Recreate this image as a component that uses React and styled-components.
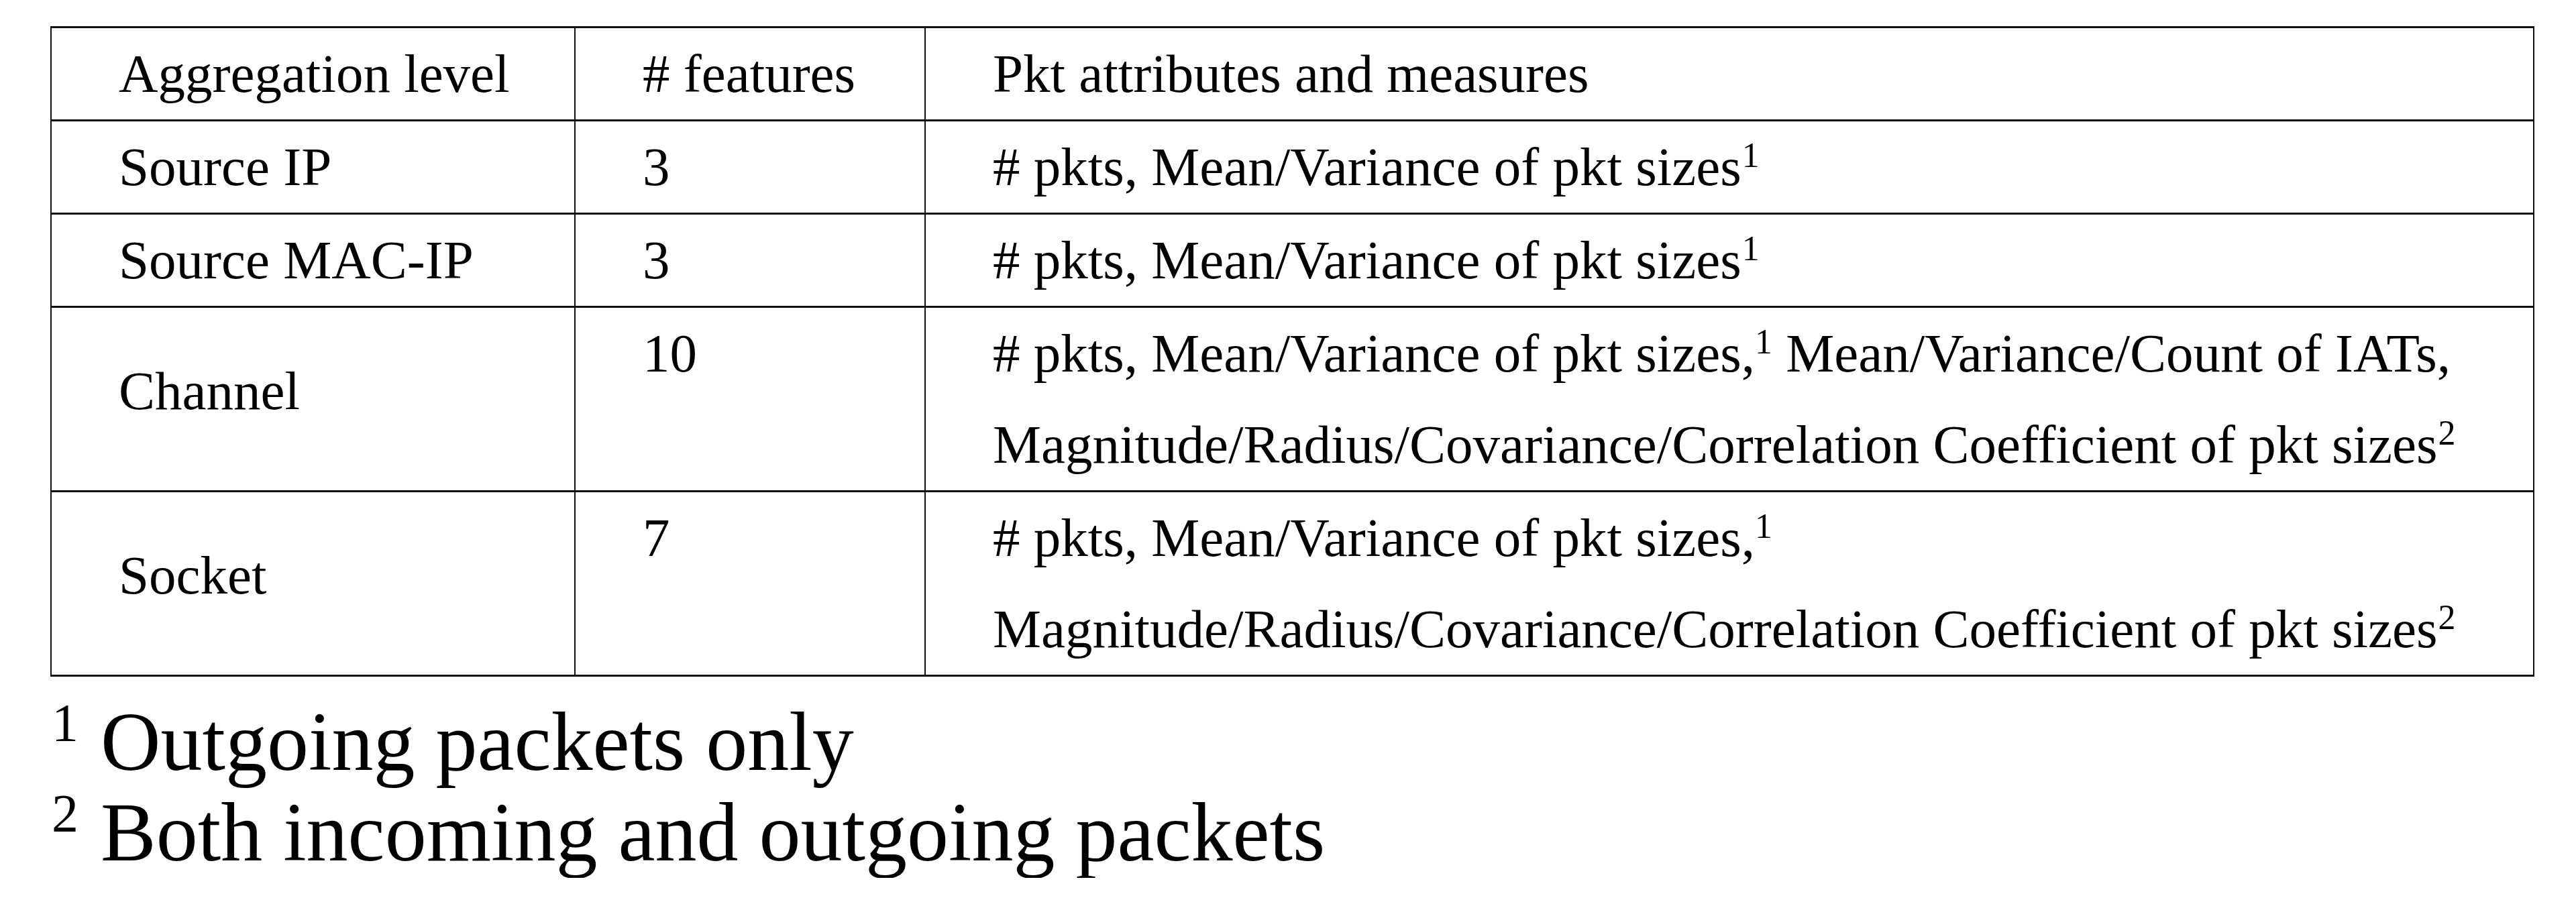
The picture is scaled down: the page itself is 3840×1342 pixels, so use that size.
import styled, { createGlobalStyle, css } from "styled-components";

const GlobalStyle = createGlobalStyle`
  html, body {
    margin: 0;
    padding: 0;
    background: #ffffff;
  }
  body {
    font-family: "Liberation Serif", "Times New Roman", serif;
    color: #000000;
  }
`;

const Page = styled.div`
  width: 3840px;
  box-sizing: border-box;
  padding: 39px 0 0 75px;
`;

const Table = styled.div`
  width: 3703px;
  box-sizing: border-box;
  border-left: 2px solid #111;
  border-right: 2px solid #111;
  border-top: 3px solid #111;
`;

const Row = styled.div`
  display: grid;
  grid-template-columns: 779px 522px 1fr;
  border-bottom: 3px solid #111;
`;

const Cell = styled.div`
  padding-left: 100px;
  font-size: 81px;
  line-height: 136px;
  white-space: nowrap;

  & + & {
    border-left: 2px solid #111;
  }

  ${(p) =>
    p.$middle &&
    css`
      display: flex;
      align-items: center;
      padding-bottom: 24px;
    `}
`;

const Line = styled.div`
  white-space: nowrap;
`;

const Sup = styled.sup`
  font-size: 52px;
  line-height: 0;
  vertical-align: 27px;
  margin-left: ${(p) => (p.$tuck ? "0" : "1px")};
`;

const Notes = styled.div`
  margin-top: 30px;
  margin-left: 2px;
  font-size: 124px;
  line-height: 135px;
`;

const Note = styled.div`
  white-space: nowrap;
`;

const Mark = styled.span`
  display: inline-block;
  width: 73px;
  font-size: 80px;
  line-height: 0;
  vertical-align: 43px;
`;

const base = "# pkts, Mean/Variance of pkt sizes";
const magnitude = "Magnitude/Radius/Covariance/Correlation Coefficient of pkt sizes";

const rows = [
  {
    level: "Source IP",
    count: "3",
    lines: [
      <>
        {base}
        <Sup>1</Sup>
      </>,
    ],
  },
  {
    level: "Source MAC-IP",
    count: "3",
    lines: [
      <>
        {base}
        <Sup>1</Sup>
      </>,
    ],
  },
  {
    level: "Channel",
    count: "10",
    lines: [
      <>
        {base},<Sup $tuck>1</Sup> Mean/Variance/Count of IATs,
      </>,
      <>
        {magnitude}
        <Sup>2</Sup>
      </>,
    ],
  },
  {
    level: "Socket",
    count: "7",
    lines: [
      <>
        {base},<Sup $tuck>1</Sup>
      </>,
      <>
        {magnitude}
        <Sup>2</Sup>
      </>,
    ],
  },
];

const App = () => {
  return (
    <Page>
      <GlobalStyle />
      <Table>
        <Row>
          <Cell>Aggregation level</Cell>
          <Cell># features</Cell>
          <Cell>Pkt attributes and measures</Cell>
        </Row>
        {rows.map((r) => (
          <Row key={r.level}>
            <Cell $middle={r.lines.length > 1}>{r.level}</Cell>
            <Cell>{r.count}</Cell>
            <Cell>
              {r.lines.map((l, i) => (
                <Line key={i}>{l}</Line>
              ))}
            </Cell>
          </Row>
        ))}
      </Table>
      <Notes>
        <Note>
          <Mark>1</Mark>Outgoing packets only
        </Note>
        <Note>
          <Mark>2</Mark>Both incoming and outgoing packets
        </Note>
      </Notes>
    </Page>
  );
};

export default App;
